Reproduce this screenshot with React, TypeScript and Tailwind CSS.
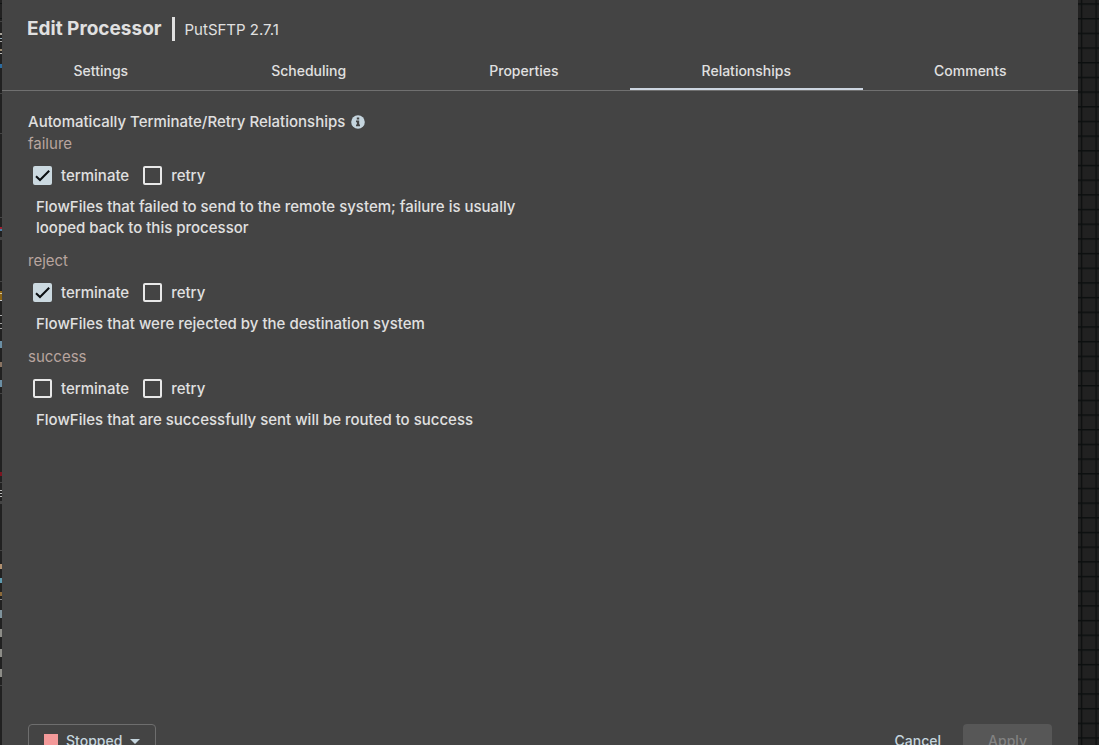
import { useState } from "react";

const tabs = ["Settings", "Scheduling", "Properties", "Relationships", "Comments"];

const relationships = [
  {
    name: "failure",
    description:
      "FlowFiles that failed to send to the remote system; failure is usually looped back to this processor",
    terminate: true,
  },
  {
    name: "reject",
    description: "FlowFiles that were rejected by the destination system",
    terminate: true,
  },
  {
    name: "success",
    description: "FlowFiles that are successfully sent will be routed to success",
    terminate: false,
  },
];

// bits of the flow canvas that show next to the dialog: [y, height, color]
const canvasBits: [number, number, string][] = [
  [3, 1, "#111414"],
  [18, 1, "#111414"],
  [21, 1, "#444444"],
  [33, 2, "#a8a39b"],
  [38, 1, "#8fa6b5"],
  [41, 1, "#aaaaaa"],
  [49, 2, "#9a8a70"],
  [53, 1, "#bbbbbb"],
  [64, 4, "#2c6ca0"],
  [93, 1, "#444444"],
  [133, 1, "#444444"],
  [217, 1, "#444444"],
  [227, 2, "#a02030"],
  [229, 2, "#4f7fa5"],
  [237, 3, "#444444"],
  [281, 1, "#444444"],
  [291, 9, "#8c6414"],
  [293, 1, "#d8c8a0"],
  [300, 1, "#c8c8c8"],
  [315, 1, "#b0b0b0"],
  [323, 1, "#a0a0a0"],
  [328, 1, "#a0a0a0"],
  [341, 7, "#6b8fa5"],
  [362, 5, "#8a7462"],
  [380, 7, "#6b8fa5"],
  [393, 1, "#444444"],
  [472, 4, "#7d1420"],
  [482, 1, "#444444"],
  [490, 1, "#b8b8b8"],
  [493, 1, "#b8b8b8"],
  [496, 1, "#b8b8b8"],
  [501, 3, "#444444"],
  [550, 1, "#444444"],
  [564, 5, "#b09070"],
  [578, 5, "#5f9bb0"],
  [592, 4, "#8c6a3a"],
  [599, 1, "#888888"],
  [610, 8, "#7f939c"],
  [629, 8, "#8d8d88"],
  [649, 8, "#8d8d88"],
  [669, 8, "#8d8d88"],
  [685, 1, "#444444"],
];

const CanvasLeft = () => {
  return (
    <svg className="h-full w-[2px] shrink-0" aria-hidden="true">
      {canvasBits.map(([y, height, color]) => (
        <rect key={y} x="0" y={y} width="2" height={height} fill={color} />
      ))}
    </svg>
  );
};

const CanvasRight = () => {
  return (
    <svg className="h-full w-[21px] shrink-0" aria-hidden="true">
      <defs>
        <pattern id="grid" x="2.8" y="3.3" width="14.68" height="14.68" patternUnits="userSpaceOnUse">
          <path d="M0 .7H14.7M.7 0V14.7" stroke="#0c0f0f" strokeWidth="1.4" />
        </pattern>
      </defs>
      <rect width="100%" height="100%" fill="url(#grid)" />
    </svg>
  );
};

const InfoIcon = () => {
  return (
    <svg className="size-[14px]" viewBox="0 0 14 14" aria-hidden="true">
      <circle cx="7" cy="7" r="6.8" fill="#c5d5de" />
      <path d="M5.8 2.6h2.4v2H5.8zM5 5.6h3.2v4H9v1.6H5V9.6h.9V7.2H5z" fill="#444444" />
    </svg>
  );
};

const Checkbox = ({ id, label, initial }: { id: string; label: string; initial: boolean }) => {
  const [checked, setChecked] = useState(initial);

  return (
    <div className="flex items-center gap-[9px]">
      <span className="relative flex">
        <input
          id={id}
          type="checkbox"
          checked={checked}
          onChange={() => setChecked(!checked)}
          className="size-[19px] appearance-none rounded-[2px] border-2 border-[#e8e8e8] checked:border-[#cbd9e0] checked:bg-[#cbd9e0]"
        />
        {checked && (
          <svg
            className="pointer-events-none absolute inset-0 size-[19px]"
            viewBox="0 0 19 19"
            fill="none"
            aria-hidden="true"
          >
            <path d="M3 10.2L7 14L16.2 4.8" stroke="#0b0f12" strokeWidth="2" />
          </svg>
        )}
      </span>
      <label htmlFor={id}>{label}</label>
    </div>
  );
};

export default function App() {
  const [active, setActive] = useState("Relationships");

  return (
    <div className="flex h-screen overflow-hidden bg-[#212121] font-['Inter',sans-serif] text-[15px] leading-[21px] font-medium text-[#e0e0e0]">
      <CanvasLeft />
      <div className="min-w-0 flex-1">
        <div className="flex h-full flex-col bg-[#444444]">
          <header className="flex items-center px-[25px] pt-4">
            <h1 className="text-[19px] leading-6 font-bold">Edit Processor</h1>
            <span className="mx-[10px] h-6 w-[3px] bg-[#e0e0e0]" />
            <h2 className="pt-[2px] text-[15px] leading-6 font-normal">PutSFTP 2.7.1</h2>
          </header>

          <div role="tablist" className="mt-[10px] flex shrink-0 border-b border-[#707070] text-sm">
            {tabs.map((tab) => (
              <button
                key={tab}
                type="button"
                role="tab"
                aria-selected={tab === active}
                onClick={() => setActive(tab)}
                className={`h-[38px] flex-auto border-b-2 px-6 pt-[2px] ${
                  tab === active ? "border-[#ccd5e0]" : "border-transparent"
                }`}
              >
                {tab}
              </button>
            ))}
          </div>

          <main className="min-h-[633px] shrink-0 px-[26px] pt-5">
            <div className="flex h-[22px] items-start gap-[6px]">
              Automatically Terminate/Retry Relationships
              <span className="flex h-[21px] items-center">
                <InfoIcon />
              </span>
            </div>
            <div className="flex max-w-[500px] flex-col gap-3">
              {relationships.map((item) => (
                <section key={item.name}>
                  <h3 className="font-normal text-[#b8a59f]">{item.name}</h3>
                  <div className="flex h-[42px] items-center gap-[14px] pl-[5px]">
                    <Checkbox id={`${item.name}-terminate`} label="terminate" initial={item.terminate} />
                    <Checkbox id={`${item.name}-retry`} label="retry" initial={false} />
                  </div>
                  <p className="pl-2">{item.description}</p>
                </section>
              ))}
            </div>
          </main>

          <footer className="flex shrink-0 items-start justify-between px-[26px] text-sm text-[#c5d5de]">
            <button
              type="button"
              className="flex h-[34px] items-center gap-2 rounded border border-[#6e6e6e] px-[15px]"
            >
              <span className="size-[14px] bg-[#f49a9a]" />
              Stopped
              <svg className="h-[5px] w-[10px]" viewBox="0 0 10 5" fill="currentColor" aria-hidden="true">
                <path d="M0 0h10L5 5z" />
              </svg>
            </button>
            <div className="flex">
              <button type="button" className="h-[34px] px-[22px]">
                Cancel
              </button>
              <button type="button" disabled className="h-[34px] rounded bg-[#575757] px-[25px] text-[#828282]">
                Apply
              </button>
            </div>
          </footer>
        </div>
      </div>
      <CanvasRight />
    </div>
  );
}
